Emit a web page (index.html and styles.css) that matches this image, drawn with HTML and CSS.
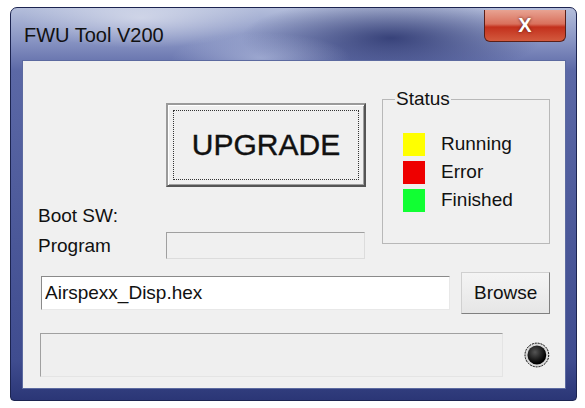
FILE: index.html
```html
<!DOCTYPE html>
<html lang="en">
<head>
    <meta charset="UTF-8">
    <title>FWU Tool V200</title>
    <link rel="stylesheet" href="styles.css">
</head>
<body>

<div class="ventana">

    <div class="barra">
        <span class="titulo">FWU Tool V200</span>
        <button class="cerrar">X</button>
    </div>

    <div class="cliente">

        <div class="arriba">
            <div class="izq">
                <button class="upgrade"><span class="foco">UPGRADE</span></button>
                <div class="etiqueta boot">Boot SW:</div>
                <div class="fila_prog">
                    <span class="etiqueta">Program</span>
                    <div class="caja_prog"></div>
                </div>
            </div>

            <fieldset class="estado">
                <legend>Status</legend>
                <div class="item"><span class="cuadro amarillo"></span>Running</div>
                <div class="item"><span class="cuadro rojo"></span>Error</div>
                <div class="item"><span class="cuadro verde"></span>Finished</div>
            </fieldset>
        </div>

        <div class="fila_archivo">
            <input class="archivo" type="text" value="Airspexx_Disp.hex">
            <button class="browse">Browse</button>
        </div>

        <div class="fila_progreso">
            <div class="progreso"></div>
            <svg class="led" width="26" height="26" viewBox="0 0 26 26">
                <defs>
                    <radialGradient id="brillo" cx="40%" cy="35%" r="60%">
                        <stop offset="0" stop-color="#555"/>
                        <stop offset="1" stop-color="#000"/>
                    </radialGradient>
                </defs>
                <circle cx="13" cy="13" r="12" fill="#d8d8d8" stroke="#000" stroke-width="1" stroke-dasharray="2 1"/>
                <circle cx="13" cy="13" r="9.5" fill="url(#brillo)"/>
            </svg>
        </div>

    </div>
</div>

</body>
</html>
```

FILE: styles.css
```css
* {
    box-sizing: border-box;
}
body {
    margin: 0;
    background: #fff;
    font-family: "Liberation Sans", Arial, sans-serif;
}
.ventana {
    margin: 7px 0 0 10px;
    width: 567px;
    height: 394px;
    border: 1px solid #1c2450;
    border-radius: 7px 7px 4px 4px;
    background:
        radial-gradient(ellipse 120px 30px at 130px 10px, rgba(255,255,255,0.45), transparent),
        radial-gradient(ellipse 90px 25px at 250px 50px, rgba(200,210,235,0.5), transparent),
        radial-gradient(ellipse 150px 40px at 380px 30px, rgba(20,30,90,0.7), transparent),
        linear-gradient(180deg, #b4bedb 0%, #8a96c4 8%, #5b68a6 16%, #3f4c8f 90%, #2b3676 100%);
    display: flex;
    flex-direction: column;
    overflow: hidden;
}
.barra {
    height: 52px;
    display: flex;
    align-items: flex-start;
    justify-content: space-between;
    padding-left: 13px;
}
.titulo {
    margin-top: 16px;
    font-size: 20px;
    color: #111;
}
.cerrar {
    width: 82px;
    height: 32px;
    margin: 2px 10px 0 0;
    border: 1px solid #5a1f18;
    border-top: none;
    border-radius: 0 0 6px 6px;
    background: linear-gradient(180deg, #e8a392 0%, #d9705c 45%, #c3301c 55%, #d35a3e 100%);
    color: #fff;
    font-weight: bold;
    font-size: 20px;
    text-shadow: 0 0 3px #5a1f18;
    padding: 0;
}
.cliente {
    margin: 0 10px 11px 11px;
    flex: 1;
    background: #f0f0f0;
    border: 1px solid #5c6aa0;
    padding: 0 15px 0 15px;
}
.arriba {
    display: flex;
}
.izq {
    flex: 1;
}
.etiqueta {
    font-size: 19px;
    color: #111;
}
.upgrade {
    display: block;
    margin: 42px 0 0 128px;
    width: 200px;
    height: 84px;
    padding: 5px;
    background: #f0f0f0;
    border: 2px solid;
    border-color: #9a9a9a #555 #555 #9a9a9a;
    box-shadow: inset 1px 1px 0 #fff, inset -1px -1px 0 #a0a0a0;
    font-family: inherit;
}
.foco {
    display: flex;
    align-items: center;
    justify-content: center;
    height: 100%;
    border: 1px dotted #333;
    font-size: 30px;
    color: #111;
    -webkit-text-stroke: 0.4px #111;
}
.boot {
    margin-top: 19px;
    line-height: 20px;
}
.fila_prog {
    display: flex;
    align-items: center;
    margin-top: 6px;
}
.fila_prog .etiqueta {
    width: 128px;
}
.caja_prog {
    width: 199px;
    height: 27px;
    border: 1px solid;
    border-color: #a0a0a0 #dcdcdc #dcdcdc #a0a0a0;
    background: #f0f0f0;
}
.estado {
    margin: 27px 0 0 0;
    width: 168px;
    height: 156px;
    border: 1px solid #b8b8b8;
    padding: 20px 0 0 20px;
}
.estado legend {
    font-size: 19px;
    color: #111;
    padding: 0 1px;
    margin-left: -8px;
}
.item {
    display: flex;
    align-items: center;
    height: 28px;
    font-size: 19px;
    color: #111;
}
.cuadro {
    width: 22px;
    height: 23px;
    margin-right: 16px;
}
.amarillo {
    background: #ffff00;
}
.rojo {
    background: #ee0000;
}
.verde {
    background: #11ff33;
}
.fila_archivo {
    display: flex;
    align-items: center;
    margin-top: 13px;
    height: 42px;
}
.archivo {
    width: 411px;
    height: 34px;
    margin-left: 3px;
    border: 1px solid;
    border-color: #8a8a8a #e8e8e8 #e8e8e8 #8a8a8a;
    background: #fff;
    font-family: inherit;
    font-size: 19px;
    color: #111;
    padding: 0 3px;
}
.browse {
    margin-left: 11px;
    width: 89px;
    height: 42px;
    background: linear-gradient(180deg, #f4f4f4, #e6e6e6);
    border: 1px solid;
    border-color: #d0d0d0 #808080 #808080 #d0d0d0;
    font-family: inherit;
    font-size: 19px;
    color: #111;
    padding: 0;
}
.fila_progreso {
    display: flex;
    align-items: center;
    margin-top: 19px;
}
.progreso {
    width: 468px;
    height: 44px;
    margin-left: 2px;
    border: 1px solid;
    border-color: #a0a0a0 #e4e4e4 #e4e4e4 #a0a0a0;
    background: #efefef;
}
.led {
    margin-left: 21px;
}
```
